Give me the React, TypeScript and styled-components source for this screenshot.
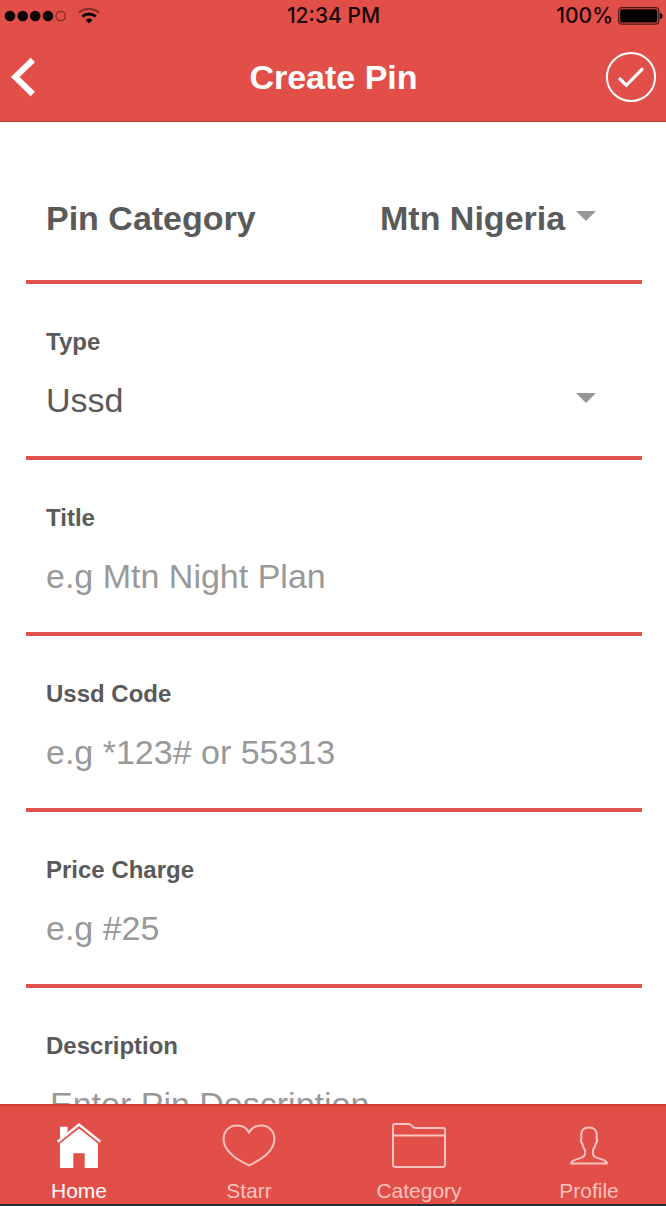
import React from 'react';
import styled, { createGlobalStyle } from 'styled-components';

const Global = createGlobalStyle`
  *, *::before, *::after { box-sizing: border-box; }
  body { margin: 0; background: #ffffff; }
  button, input, select, textarea { font: inherit; color: inherit; }
`;

const Screen = styled.div`
  display: flex;
  flex-direction: column;
  height: 100vh;
  overflow: hidden;
  font-family: "Liberation Sans", Arial, sans-serif;
  color: #5a5a5a;
`;

const Header = styled.header`
  flex: none;
  background: #e24e48;
  border-bottom: 1px solid #b23c38;
`;

const StatusBar = styled.div`
  display: grid;
  grid-template-columns: 1fr auto 1fr;
  align-items: center;
  height: 31px;
  padding: 0 3px 0 4px;
  font-family: Inter, sans-serif;
  font-size: 21px;
  font-weight: 500;
  line-height: 31px;
  color: #160404;
`;

const StatusGroup = styled.div<{ $end?: boolean; $gap: number }>`
  display: flex;
  align-items: center;
  justify-content: ${p => (p.$end ? 'flex-end' : 'flex-start')};
  gap: ${p => p.$gap}px;
`;

const NavBar = styled.div`
  display: grid;
  grid-template-columns: 1fr auto 1fr;
  align-items: center;
  height: 90px;
  padding: 2px 9px 0 10px;
  color: #ffffff;
`;

const Title = styled.h1`
  margin: 0;
  font-size: 34px;
  font-weight: bold;
  line-height: 40px;
`;

const IconButton = styled.button<{ $end?: boolean }>`
  display: flex;
  justify-self: ${p => (p.$end ? 'end' : 'start')};
  padding: 0;
  border: 0;
  background: none;
  cursor: pointer;
`;

const Form = styled.form`
  flex: 1;
  min-height: 0;
  overflow: hidden;
  padding: 0 24px 0 26px;
`;

const CategoryRow = styled.div`
  display: flex;
  justify-content: space-between;
  align-items: center;
  padding: 76px 46px 42px 20px;
  border-bottom: 4px solid #e0514e;
  font-size: 34px;
  font-weight: bold;
  line-height: 40px;
`;

const Field = styled.div`
  display: flex;
  flex-direction: column;
  gap: 24px;
  padding: 44px 46px 36px 20px;
  border-bottom: 4px solid #e0514e;
`;

const Label = styled.label`
  font-size: 24px;
  font-weight: bold;
  line-height: 28px;
`;

const SelectBox = styled.div`
  display: flex;
  align-items: center;
  gap: 10px;
`;

const Select = styled.select<{ $fit?: boolean }>`
  appearance: none;
  flex: ${p => (p.$fit ? 'none' : '1')};
  min-width: 0;
  height: 40px;
  padding: 0;
  border: 0;
  outline: 0;
  background: none;
  font-size: 34px;
  line-height: 40px;
`;

const Arrow = styled.svg`
  flex: none;
  margin-bottom: 4px;
`;

const Input = styled.input`
  width: 100%;
  height: 40px;
  padding: 0;
  border: 0;
  outline: 0;
  background: none;
  font-size: 34px;
  line-height: 40px;
  &::placeholder { color: #999999; opacity: 1; }
`;

const TextArea = styled.textarea`
  width: 100%;
  height: 120px;
  padding: 0 4px;
  border: 0;
  outline: 0;
  resize: none;
  background: none;
  font-size: 34px;
  line-height: 40px;
  &::placeholder { color: #999999; opacity: 1; }
`;

const TabBar = styled.nav`
  flex: none;
  display: flex;
  justify-content: space-between;
  height: 102px;
  padding: 0 28px 0 30px;
  background: #e24e48;
  border-top: 2px solid #d43a30;
  border-bottom: 2px solid #2b2b33;
`;

const Tab = styled.a<{ $active?: boolean }>`
  display: flex;
  flex-direction: column;
  align-items: center;
  gap: 9px;
  width: 98px;
  padding-top: 14px;
  color: ${p => (p.$active ? '#ffffff' : '#fbc3bd')};
  font-size: 21px;
  line-height: 24px;
  text-decoration: none;
`;

const Caret = () => (
  <Arrow width="20" height="10" viewBox="0 0 20 10" aria-hidden="true">
    <path d="M0 0H20L10 10Z" fill="#979797" />
  </Arrow>
);

const Signal = () => (
  <svg width="63" height="12" viewBox="0 0 63 12" aria-hidden="true">
    {[6, 18.7, 31.2, 44].map(x => (
      <circle key={x} cx={x} cy="6" r="5.3" fill="#0c0202" />
    ))}
    <circle cx="56.7" cy="6" r="4.7" fill="none" stroke="#7c2623" strokeWidth="1.2" />
  </svg>
);

const Wifi = () => (
  <svg width="22" height="16" viewBox="0 0 22 16" fill="none" aria-hidden="true">
    <path d="M0.8 4.8C6.5 -0.4 15.5 -0.4 21.2 4.8" stroke="#8c2c28" strokeWidth="2.2" />
    <path d="M4.3 8.6C8 5.1 14 5.1 17.7 8.6" stroke="#0c0202" strokeWidth="2.8" />
    <path d="M7.7 12C9.6 10.1 12.4 10.1 14.3 12L11 15.6Z" fill="#0c0202" />
  </svg>
);

const Battery = () => (
  <svg width="45" height="18" viewBox="0 0 45 18" aria-hidden="true">
    <rect x="0.7" y="0.7" width="40" height="16.4" rx="3" fill="none" stroke="#4b1513" strokeWidth="1.2" />
    <rect x="2.2" y="2.2" width="37" height="13.4" rx="1.8" fill="#050000" />
    <path d="M41.6 5.8C46 6.5 46 11.5 41.6 12.2Z" fill="#2c0b0a" />
  </svg>
);

const Back = () => (
  <svg width="28" height="42" viewBox="0 0 28 42" fill="none" aria-hidden="true">
    <path d="M22.8 4L5.2 21L22.8 38" stroke="#fff" strokeWidth="6" />
  </svg>
);

const Check = () => (
  <svg width="52" height="52" viewBox="0 0 52 52" fill="none" stroke="#fff" aria-hidden="true">
    <circle cx="26" cy="26" r="24.1" strokeWidth="2" />
    <path d="M15 28L21.3 34.3L37 18.3" strokeWidth="3.2" strokeLinecap="round" />
  </svg>
);

const HomeIcon = () => (
  <svg width="56" height="50" viewBox="0 0 56 50" aria-hidden="true">
    <path d="M9 18V6.8H16.5V13Z" fill="#fff" />
    <path d="M6.6 21.8L28 4.6L49.4 21.8" fill="none" stroke="#fff" strokeWidth="2.4" />
    <path d="M9 23.5L28 8.4L47 23.5V48H33.7V33.2H22.3V48H9Z" fill="#fff" />
  </svg>
);

const HeartIcon = () => (
  <svg width="56" height="50" viewBox="0 0 56 50" fill="none" stroke="currentColor" strokeWidth="2" aria-hidden="true">
    <path d="M28 12.4C25.5 8 21 5.5 16 5.5C8.5 5.5 2.6 11 2.6 19C2.6 29.5 12 38 28 45.4C44 38 53.4 29.5 53.4 19C53.4 11 47.5 5.5 40 5.5C35 5.5 30.5 8 28 12.4Z" />
  </svg>
);

const FolderIcon = () => (
  <svg width="56" height="50" viewBox="0 0 56 50" fill="none" stroke="currentColor" strokeWidth="2" aria-hidden="true">
    <path d="M4 4H17.5C19 4 19.6 4.5 20.6 5.5L22.2 7.1C23 7.8 23.6 8.1 25 8.1H52C53.4 8.1 54 8.8 54 10.1V44.8C54 46.2 53.4 46.9 52 46.9H4C2.7 46.9 2 46.2 2 44.8V6C2 4.7 2.7 4 4 4Z" />
    <path d="M2 15.5H54" />
  </svg>
);

const ProfileIcon = () => (
  <svg width="56" height="50" viewBox="0 0 56 50" fill="none" stroke="currentColor" strokeWidth="2" strokeLinejoin="round" aria-hidden="true">
    <path d="M28 7.5C22.5 7.5 20 10.5 20.2 15.5L20.4 18C19.4 20.5 20 22.5 21.5 24C22 27 22.8 28.6 24 30V34C24 36.5 21.5 37.5 18.5 38.4C13.5 39.8 10.8 40.6 10 43.4H46C45.2 40.6 42.5 39.8 37.5 38.4C34.5 37.5 32 36.5 32 34V30C33.2 28.6 34 27 34.5 24C36 22.5 36.6 20.5 35.6 18L35.8 15.5C36 10.5 33.5 7.5 28 7.5Z" />
  </svg>
);

const fields = [
  { id: 'title', label: 'Title', hint: 'e.g Mtn Night Plan' },
  { id: 'code', label: 'Ussd Code', hint: 'e.g *123# or 55313' },
  { id: 'price', label: 'Price Charge', hint: 'e.g #25' },
];

const tabs = [
  { name: 'Home', Icon: HomeIcon },
  { name: 'Starr', Icon: HeartIcon },
  { name: 'Category', Icon: FolderIcon },
  { name: 'Profile', Icon: ProfileIcon },
];

export default function App() {
  return (
    <Screen>
      <Global />
      <Header>
        <StatusBar>
          <StatusGroup $gap={11}>
            <Signal />
            <Wifi />
          </StatusGroup>
          <span>12:34 PM</span>
          <StatusGroup $end $gap={5}>
            <span>100%</span>
            <Battery />
          </StatusGroup>
        </StatusBar>
        <NavBar>
          <IconButton type="button" aria-label="Back"><Back /></IconButton>
          <Title>Create Pin</Title>
          <IconButton type="submit" form="pin-form" $end aria-label="Save"><Check /></IconButton>
        </NavBar>
      </Header>
      <Form id="pin-form" onSubmit={e => e.preventDefault()}>
        <CategoryRow>
          <label htmlFor="category">Pin Category</label>
          <SelectBox>
            <Select id="category" $fit>
              <option>Mtn Nigeria</option>
            </Select>
            <Caret />
          </SelectBox>
        </CategoryRow>
        <Field>
          <Label htmlFor="type">Type</Label>
          <SelectBox>
            <Select id="type">
              <option>Ussd</option>
            </Select>
            <Caret />
          </SelectBox>
        </Field>
        {fields.map(f => (
          <Field key={f.id}>
            <Label htmlFor={f.id}>{f.label}</Label>
            <Input id={f.id} placeholder={f.hint} />
          </Field>
        ))}
        <Field>
          <Label htmlFor="description">Description</Label>
          <TextArea id="description" placeholder="Enter Pin Description" />
        </Field>
      </Form>
      <TabBar>
        {tabs.map(({ name, Icon }) => (
          <Tab key={name} href={`#${name.toLowerCase()}`} $active={name === 'Home'}>
            <Icon />
            {name}
          </Tab>
        ))}
      </TabBar>
    </Screen>
  );
}
